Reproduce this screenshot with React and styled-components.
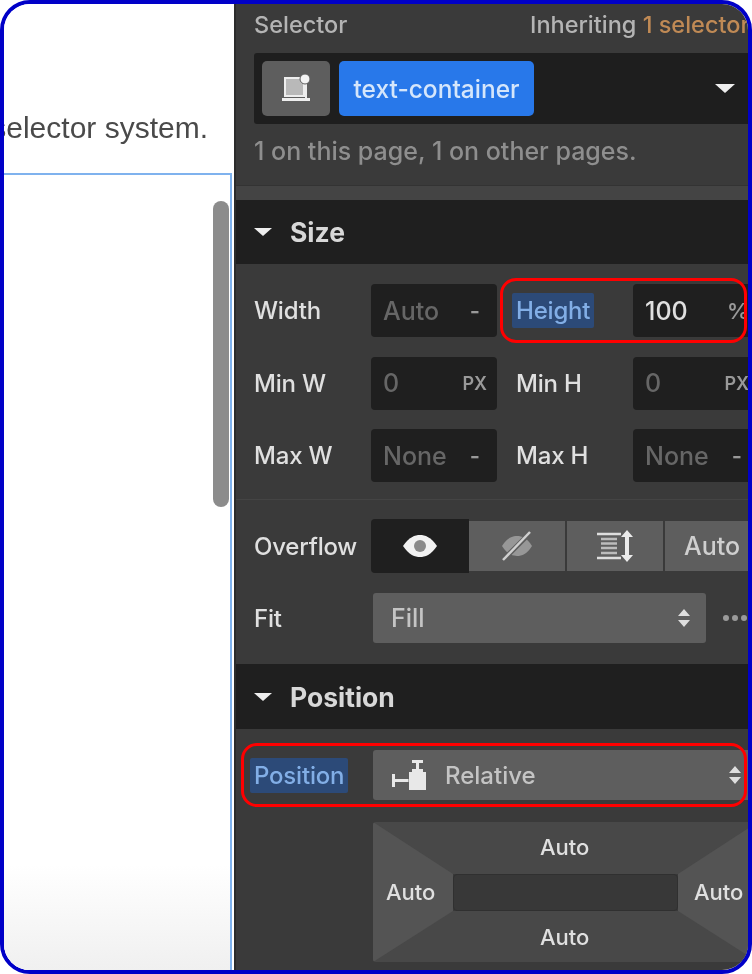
import styled, { createGlobalStyle } from "styled-components";

const Global = createGlobalStyle`
  html, body { margin: 0; padding: 0; background: #fff; }
  * { box-sizing: border-box; }
`;

const Frame = styled.div`
  width: 752px;
  height: 974px;
  border: 4px solid #0000c8;
  border-radius: 30px;
  overflow: hidden;
  display: flex;
  font-family: Inter, "Liberation Sans", sans-serif;
`;

const Canvas = styled.div`
  width: 230px;
  flex: none;
  display: flex;
  flex-direction: column;
  background: #fff;
  overflow: hidden;
`;
const Caption = styled.div`
  height: 169px;
  flex: none;
  display: flex;
  justify-content: flex-end;
  align-items: flex-end;
  padding: 0 26px 28px 0;
  font: 30px "Liberation Sans", sans-serif;
  color: #4a4a4a;
  white-space: nowrap;
  filter: blur(0.7px);
`;
const Preview = styled.div`
  flex: 1;
  position: relative;
  margin-right: 2px;
  border-top: 2px solid #7fb2ee;
  border-right: 2px solid #7fb2ee;
  background: linear-gradient(#fff 0, #fff 690px, #f0f0f0 100%);
`;
const Scrollbar = styled.div`
  position: absolute;
  left: 209px;
  top: 26px;
  width: 16px;
  height: 306px;
  border-radius: 8px;
  background: #8c8c8c;
`;

const Panel = styled.div`
  position: relative;
  flex: 1;
  min-width: 0;
  background: #3a3a3a;
  border-left: 2px solid #2c2c2c;
  overflow: hidden;
  color: #d8d8d8;
  font-size: 25px;
  font-weight: 500;
`;
const PanelContent = styled.div`
  filter: blur(0.7px);
`;
const SelectorHead = styled.div`
  height: 49px;
  padding: 0 0 8px 18px;
  display: grid;
  grid-template-columns: 276px auto;
  align-items: center;
  white-space: nowrap;
  color: #b4b4b4;
  font-size: 23.5px;
`;
const Accent = styled.span`
  color: #c08a55;
`;
const SelectorBox = styled.div`
  height: 71px;
  margin-left: 18px;
  padding: 8px 13px 8px 8px;
  display: flex;
  align-items: center;
  gap: 9px;
  background: #1e1e1e;
  border-radius: 3px 0 0 3px;
`;
const TypeButton = styled.div`
  width: 68px;
  height: 55px;
  display: flex;
  align-items: center;
  justify-content: center;
  border-radius: 5px;
  background: #5e5e5e;
`;
const Chip = styled.div`
  width: 195px;
  height: 55px;
  display: flex;
  align-items: center;
  justify-content: center;
  border-radius: 5px;
  background: #2878ea;
  color: #d5e6fb;
  font-size: 24.5px;
`;
const Caret = styled.div`
  margin-left: auto;
  width: 0;
  height: 0;
  border-left: ${(p) => p.$size || 10}px solid transparent;
  border-right: ${(p) => p.$size || 10}px solid transparent;
  border-top: ${(p) => (p.$size ? p.$size : 10) - 1}px solid #eee;
`;
const UsageNote = styled.div`
  height: 61px;
  padding: 0 0 8px 18px;
  display: flex;
  align-items: center;
  color: #8e8e8e;
  font-size: 25px;
  white-space: nowrap;
`;
const Strip = styled.div`
  height: 15px;
  background: #444;
  border-top: 1px solid #333;
`;
const SectionHead = styled.div`
  height: ${(p) => p.$h}px;
  padding-left: 18px;
  display: flex;
  align-items: center;
  gap: 18px;
  background: #1f1f1f;
  color: #d8d8d8;
  font-size: 26.5px;
  font-weight: 700;
`;
const HeadCaret = styled(Caret)`
  margin-left: 0;
`;
const SizeGrid = styled.div`
  padding: 20px 0 17px 18px;
  display: grid;
  grid-template-columns: 117px 126px 136px 126px;
  grid-auto-rows: 53px;
  row-gap: 19.5px;
  align-items: center;
  border-bottom: 1px solid #444;
`;
const Label = styled.div`
  color: #e0e0e0;
  white-space: nowrap;
  font-size: 24px;
  letter-spacing: -0.2px;
  padding-left: ${(p) => p.$indent || 0}px;
`;
const Marked = styled.span`
  display: inline-block;
  padding: 0 4px;
  margin-left: -4px;
  line-height: 35px;
  background: #2c4a78;
  color: #82aee6;
  border-radius: 2px;
`;
const Field = styled.div`
  height: 53px;
  display: flex;
  align-items: center;
  justify-content: space-between;
  padding: 0 10px 0 12px;
  background: #1f1f1f;
  border-radius: 4px;
  color: ${(p) => (p.$on ? "#e0e0e0" : "#666")};
`;
const Unit = styled.span`
  color: #999;
  font-size: ${(p) => (p.$small ? 18 : 22)}px;
  font-weight: 600;
`;
const Dash = styled(Unit)`
  margin-right: 7px;
`;
const RedBox = styled.div`
  position: absolute;
  border: 3px solid #f00;
  border-radius: 16px;
  pointer-events: none;
  z-index: 2;
`;
const HeightRing = styled(RedBox)`
  left: 264px;
  top: 274px;
  width: 247px;
  height: 65px;
`;
const PositionRing = styled(RedBox)`
  left: 5px;
  top: 739px;
  width: 506px;
  height: 64px;
`;
const OverflowBlock = styled.div`
  padding: 19px 0 21px 18px;
  display: grid;
  grid-template-columns: 117px 1fr;
  row-gap: 20px;
  align-items: center;
`;
const Segments = styled.div`
  display: grid;
  grid-template-columns: 98px 96px 98px 100px;
  margin-right: -20px;
  align-items: center;
  white-space: nowrap;
`;
const Segment = styled.div`
  height: ${(p) => (p.$on ? 54 : 50)}px;
  display: flex;
  align-items: center;
  justify-content: ${(p) => (p.$text ? "flex-start" : "center")};
  padding-left: ${(p) => (p.$text ? 19 : 0)}px;
  background: ${(p) => (p.$on ? "#1f1f1f" : "#5e5e5e")};
  border-left: ${(p) => (p.$split ? "2px solid #3a3a3a" : "none")};
  border-radius: ${(p) => (p.$on ? "4px 0 0 4px" : "0")};
  color: #cfcfcf;
`;
const FitRow = styled.div`
  display: flex;
  align-items: center;
  gap: 16px;
  margin-left: 2px;
`;
const Select = styled.div`
  width: ${(p) => p.$w}px;
  height: 50px;
  flex: none;
  display: flex;
  align-items: center;
  gap: 19px;
  padding: 0 ${(p) => p.$end}px 0 ${(p) => p.$pad}px;
  background: #5e5e5e;
  border-radius: 3px;
  color: #c4c4c4;
  font-size: ${(p) => p.$font || 25}px;
`;
const Arrows = styled.svg`
  margin-left: auto;
  flex: none;
`;
const Dots = styled.svg`
  flex: none;
`;
const PositionBody = styled.div`
  padding: 21px 0 0 18px;
`;
const PositionRow = styled.div`
  display: grid;
  grid-template-columns: 119px 1fr;
  align-items: center;
`;
const Sides = styled.div`
  position: relative;
  width: 385px;
  height: 140px;
  margin: 22px 0 0 119px;
  border-style: solid;
  border-width: 52px 80px 51px;
  border-color: #484848 #545454;
  border-radius: 3px;
`;
const Inner = styled.div`
  height: 100%;
  background: #383838;
  border: 1px solid #303030;
  border-radius: 4px;
`;
const SideLabel = styled.span`
  position: absolute;
  color: #e0e0e0;
  font-size: 22px;
  line-height: 28px;
  left: ${(p) => p.$x}px;
  top: ${(p) => p.$y}px;
`;

function TypeIcon() {
  return (
    <svg width="32" height="30" viewBox="0 0 32 30">
      <path d="M5 4h19v18H5z" fill="#b9b9b9" stroke="#eee" strokeWidth="2" />
      <path d="M2 24h28v3H2z" fill="#eee" />
      <path d="M26 4v20" stroke="#eee" strokeWidth="2" />
      <circle cx="25" cy="5" r="5" fill="#f4f4f4" stroke="#5e5e5e" strokeWidth="1" />
    </svg>
  );
}

function EyeIcon() {
  return (
    <svg width="36" height="24" viewBox="0 0 36 24">
      <path d="M1 12C7 3 13 1 18 1s11 2 17 11c-6 9-12 11-17 11S7 21 1 12z" fill="#f2f2f2" />
      <circle cx="18" cy="12" r="6" fill="#8a8a8a" />
    </svg>
  );
}

function EyeOffIcon() {
  return (
    <svg width="34" height="32" viewBox="0 0 34 32">
      <path d="M2 16C7 8 12 6 17 6s10 2 15 10c-5 8-10 10-15 10S7 24 2 16z" fill="#979797" />
      <path d="M4 29L30 3" stroke="#5e5e5e" strokeWidth="5" />
      <path d="M3 30L30 2" stroke="#d0d0d0" strokeWidth="2.500" />
    </svg>
  );
}

function ScrollIcon() {
  return (
    <svg width="38" height="32" viewBox="0 0 38 32">
      <path d="M1 4h24M1 28h24" stroke="#dedede" strokeWidth="2.500" />
      <path d="M5 9h16M5 13.500h16M5 18h16M5 23h16" stroke="#bcbcbc" strokeWidth="2.500" />
      <path d="M31 5v22" stroke="#ececec" strokeWidth="4" />
      <path d="M31 0l6 7H25zM31 32l6-7H25z" fill="#ececec" />
    </svg>
  );
}

function RelativeIcon() {
  return (
    <svg width="34" height="30" viewBox="0 0 34 30">
      <path d="M1.500 14v13M1.500 20.500h15" stroke="#e8e8e8" strokeWidth="3" fill="none" />
      <path d="M17 12h17v18H17z" fill="#e8e8e8" />
      <path d="M20 9h11v3H20z" fill="#e8e8e8" />
      <path d="M20 1.500h11M25.500 1.500V9" stroke="#e8e8e8" strokeWidth="3" />
    </svg>
  );
}

function UpDown() {
  return (
    <Arrows width="14" height="20" viewBox="0 0 14 20">
      <path d="M7 1l6 7H1zM7 19l6-7H1z" fill="#dedede" />
    </Arrows>
  );
}

export default function App() {
  return (
    <>
      <Global />
      <Frame>
        <Canvas>
          <Caption>selector system.</Caption>
          <Preview>
            <Scrollbar />
          </Preview>
        </Canvas>
        <Panel>
          <PanelContent>
            <SelectorHead>
              <span>Selector</span>
              <span>
                Inheriting <Accent>1 selector</Accent>
              </span>
            </SelectorHead>
            <SelectorBox>
              <TypeButton>
                <TypeIcon />
              </TypeButton>
              <Chip>text-container</Chip>
              <Caret />
            </SelectorBox>
            <UsageNote>1 on this page, 1 on other pages.</UsageNote>
            <Strip />
            <SectionHead $h={64}>
              <HeadCaret $size={9} />
              Size
            </SectionHead>
            <SizeGrid>
              <Label>Width</Label>
              <Field>
                Auto <Dash>-</Dash>
              </Field>
              <Label $indent={19}>
                <Marked>Height</Marked>
              </Label>
              <Field $on>
                100 <Unit>%</Unit>
              </Field>
              <Label>Min W</Label>
              <Field>
                0 <Unit $small>PX</Unit>
              </Field>
              <Label $indent={19}>Min H</Label>
              <Field>
                0 <Unit $small>PX</Unit>
              </Field>
              <Label>Max W</Label>
              <Field>
                None <Dash>-</Dash>
              </Field>
              <Label $indent={19}>Max H</Label>
              <Field>
                None <Dash>-</Dash>
              </Field>
            </SizeGrid>
            <OverflowBlock>
              <Label>Overflow</Label>
              <Segments>
                <Segment $on>
                  <EyeIcon />
                </Segment>
                <Segment>
                  <EyeOffIcon />
                </Segment>
                <Segment $split>
                  <ScrollIcon />
                </Segment>
                <Segment $split $text>
                  Auto
                </Segment>
              </Segments>
              <Label>Fit</Label>
              <FitRow>
                <Select $w={333} $pad={18} $end={15}>
                  Fill
                  <UpDown />
                </Select>
                <Dots width="30" height="8" viewBox="0 0 30 8">
                  <circle cx="4" cy="4" r="3" fill="#9a9a9a" />
                  <circle cx="13" cy="4" r="3" fill="#9a9a9a" />
                  <circle cx="22" cy="4" r="3" fill="#9a9a9a" />
                </Dots>
              </FitRow>
            </OverflowBlock>
            <SectionHead $h={65}>
              <HeadCaret $size={9} />
              Position
            </SectionHead>
            <PositionBody>
              <PositionRow>
                <Label>
                  <Marked>Position</Marked>
                </Label>
                <Select $w={385} $pad={19} $end={16} $font={24}>
                  <RelativeIcon />
                  Relative
                  <UpDown />
                </Select>
              </PositionRow>
              <Sides>
                <Inner />
                <SideLabel $x={87} $y={-41}>Auto</SideLabel>
                <SideLabel $x={-67} $y={4}>Auto</SideLabel>
                <SideLabel $x={241} $y={4}>Auto</SideLabel>
                <SideLabel $x={87} $y={49}>Auto</SideLabel>
              </Sides>
            </PositionBody>
          </PanelContent>
          <HeightRing />
          <PositionRing />
        </Panel>
      </Frame>
    </>
  );
}
